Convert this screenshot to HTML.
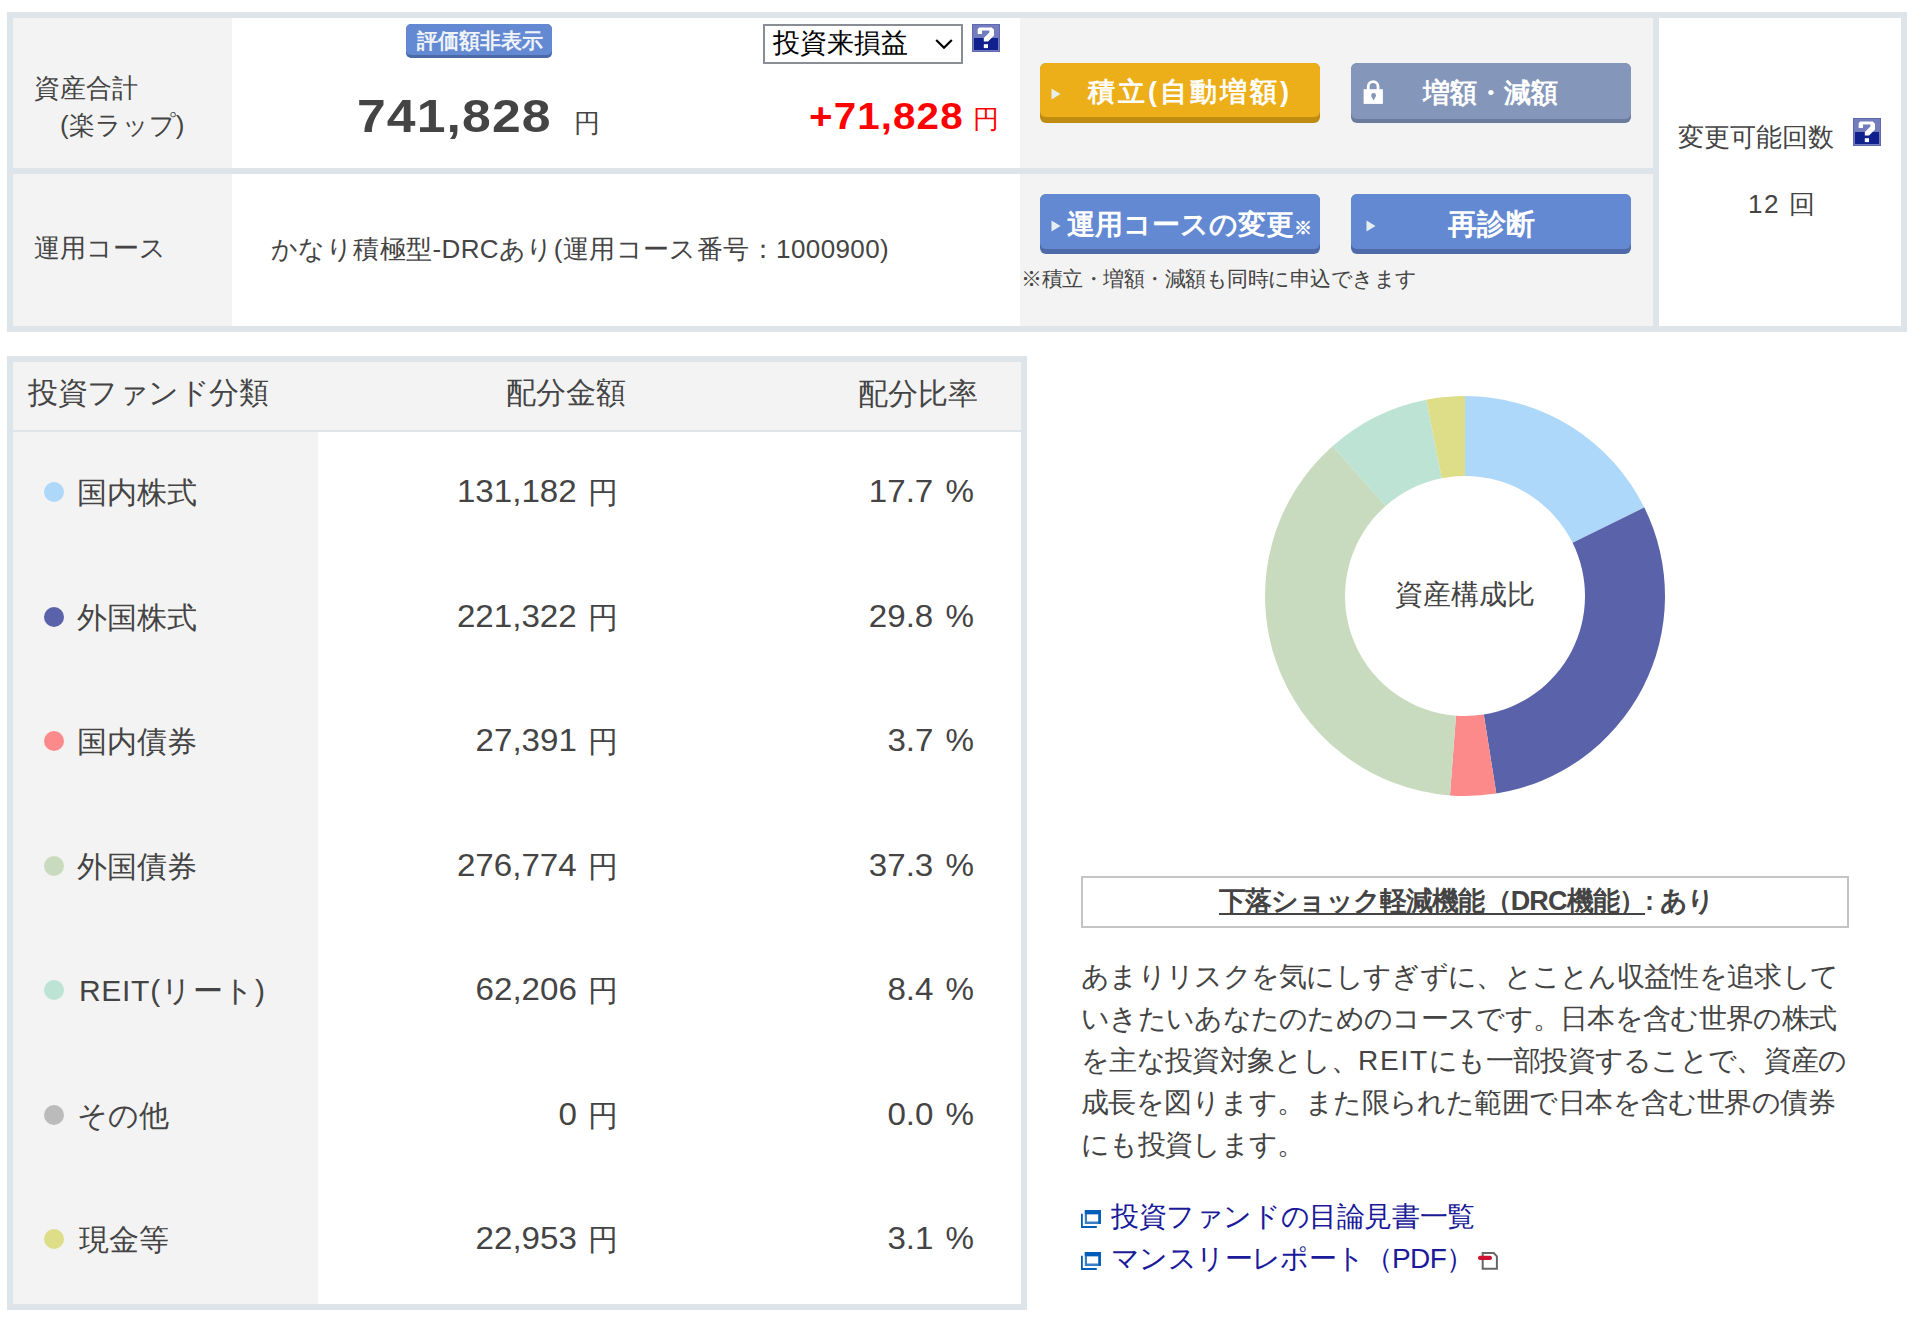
<!DOCTYPE html>
<html lang="ja">
<head>
<meta charset="utf-8">
<style>
*{margin:0;padding:0;box-sizing:border-box}
html,body{width:1922px;height:1326px;overflow:hidden;background:#fff}
body{position:relative;font-family:"Liberation Sans",sans-serif;color:#444}
.a{position:absolute}
.t{position:absolute;white-space:nowrap;line-height:1}
.bd{background:#dde4ea}
.g{background:#f3f3f3}
.w{background:#fff}
.btn{position:absolute;border-radius:6px;overflow:hidden}
.btn .face{position:absolute;left:0;right:0;top:0;border-radius:6px}
.btn .tx{position:absolute;color:#fff;white-space:nowrap;line-height:1;font-weight:bold}
</style>
</head>
<body>
<div class="a bd" style="left:7px;top:12px;width:1900px;height:320px"></div>
<div class="a g" style="left:13px;top:18px;width:219px;height:150px"></div>
<div class="a w" style="left:232px;top:18px;width:788px;height:150px"></div>
<div class="a g" style="left:1020px;top:18px;width:633px;height:150px"></div>
<div class="a g" style="left:13px;top:174px;width:219px;height:152px"></div>
<div class="a w" style="left:232px;top:174px;width:788px;height:152px"></div>
<div class="a g" style="left:1020px;top:174px;width:633px;height:152px"></div>
<div class="a w" style="left:1659px;top:18px;width:242px;height:308px"></div>

<div class="a bd" style="left:7px;top:356px;width:1020px;height:954px"></div>
<div class="a g" style="left:13px;top:362px;width:1008px;height:68px"></div>
<div class="a g" style="left:13px;top:432px;width:305px;height:872px"></div>
<div class="a w" style="left:318px;top:432px;width:703px;height:872px"></div>

<div class="t" style="left:34px;top:70px;font-size:26px;line-height:37px">資産合計<br>　(楽ラップ)</div>
<div class="t" style="left:34px;top:235px;font-size:26px">運用コース</div>

<div class="btn" style="left:406px;top:24px;width:146px;height:34px;background:#4d6aa8;border-radius:5px">
  <div class="face" style="bottom:3px;background:#6389d2;border-radius:5px"></div>
  <div class="tx" style="left:11px;top:6px;font-size:21px;color:#eef2fa">評価額非表示</div>
</div>

<div class="t" style="left:357px;top:92px;font-size:47px;font-weight:bold;letter-spacing:1px;transform:scaleX(1.1);transform-origin:0 0">741,828</div>
<div class="t" style="left:574px;top:110px;font-size:26px">円</div>

<div class="a" style="left:763px;top:24px;width:200px;height:40px;border:2px solid #8a8d93;background:#fff"></div>
<div class="t" style="left:773px;top:30px;font-size:27px;color:#000">投資来損益</div>
<svg class="a" style="left:933px;top:37px" width="22" height="14" viewBox="0 0 22 14"><path d="M3.2 3 L11 10.8 L18.8 3" fill="none" stroke="#000" stroke-width="2.2"/></svg>
<svg class="a" style="left:972px;top:24px" width="28" height="28" viewBox="0 0 28 28">
 <rect x="0" y="0" width="28" height="28" fill="#6068b0"/>
 <rect x="1" y="1" width="26" height="26" fill="#737cbc"/>
 <rect x="2" y="14" width="24" height="12" fill="#10208c"/>
 <path d="M7.2 3.6 H19.8 L22 5.8 V11.6 L16 17.6 H11.8 V14 L17.4 8.6 V6.6 H10 V10 H5.7 V5 Z" fill="#fff"/>
 <rect x="11.8" y="20.2" width="4.2" height="3.9" fill="#fff"/>
</svg>

<div class="t" style="left:809px;top:99px;font-size:36px;font-weight:bold;color:#f00;letter-spacing:1px;transform:scaleX(1.12);transform-origin:0 0">+71,828</div>
<div class="t" style="left:973px;top:106px;font-size:26px;color:#f00">円</div>

<div class="t" style="left:271px;top:236px;font-size:26px;letter-spacing:0.4px">かなり積極型-DRCあり(運用コース番号：1000900)</div>

<div class="btn" style="left:1040px;top:63px;width:280px;height:60px;background:#bf8c12">
  <div class="face" style="bottom:6px;background:#ecae19"></div>
  <svg class="a" style="left:11px;top:25px" width="10" height="12"><path d="M0.5 0.5 L9.5 6 L0.5 11.5 Z" fill="#e6eef0"/></svg>
  <div class="tx" style="left:48px;top:16px;font-size:27px;letter-spacing:3px">積立(自動増額)</div>
</div>
<div class="btn" style="left:1351px;top:63px;width:280px;height:60px;background:#6b7b9b">
  <div class="face" style="bottom:4px;background:#8496b9"></div>
  <svg class="a" style="left:11px;top:16px" width="22" height="26" viewBox="0 0 22 26">
   <path d="M4.9 11 V7.4 A6.25 6.2 0 0 1 17.4 7.4 V11 H14.6 V7.6 A3.5 3.6 0 0 0 7.6 7.6 V11 Z" fill="#fff"/>
   <rect x="1.6" y="10.2" width="19.3" height="14.7" fill="#fff"/>
   <circle cx="11.6" cy="16.4" r="2.4" fill="#8496b9"/>
   <path d="M9.6 17.2 H13.6 L11.9 21.2 H11.3 Z" fill="#8496b9"/>
  </svg>
  <div class="tx" style="left:72px;top:17px;font-size:27px">増額・減額</div>
</div>
<div class="btn" style="left:1040px;top:194px;width:280px;height:60px;background:#4e6aa8">
  <div class="face" style="bottom:5px;background:#6389d2"></div>
  <svg class="a" style="left:11px;top:26px" width="10" height="12"><path d="M0.5 0.5 L9.5 6 L0.5 11.5 Z" fill="#e6eef0"/></svg>
  <div class="tx" style="left:27px;top:17px;font-size:28px">運用コースの変更<span style="font-size:18px">※</span></div>
</div>
<div class="btn" style="left:1351px;top:194px;width:280px;height:60px;background:#4e6aa8">
  <div class="face" style="bottom:5px;background:#6389d2"></div>
  <svg class="a" style="left:15px;top:26px" width="10" height="12"><path d="M0.5 0.5 L9.5 6 L0.5 11.5 Z" fill="#e6eef0"/></svg>
  <div class="tx" style="left:97px;top:16px;font-size:29px">再診断</div>
</div>
<div class="t" style="left:1021px;top:268px;font-size:21px;letter-spacing:-0.5px">※積立・増額・減額も同時に申込できます</div>

<div class="t" style="left:1678px;top:124px;font-size:26px">変更可能回数</div>
<svg class="a" style="left:1853px;top:118px" width="28" height="28" viewBox="0 0 28 28">
 <rect x="0" y="0" width="28" height="28" fill="#6068b0"/>
 <rect x="1" y="1" width="26" height="26" fill="#737cbc"/>
 <rect x="2" y="14" width="24" height="12" fill="#10208c"/>
 <path d="M7.2 3.6 H19.8 L22 5.8 V11.6 L16 17.6 H11.8 V14 L17.4 8.6 V6.6 H10 V10 H5.7 V5 Z" fill="#fff"/>
 <rect x="11.8" y="20.2" width="4.2" height="3.9" fill="#fff"/>
</svg>
<div class="t" style="left:1748px;top:191px;font-size:26px"><span style="letter-spacing:1.5px">12 </span>回</div>

<div class="t" style="left:28px;top:378px;font-size:30px;letter-spacing:-0.5px">投資ファンド分類</div>
<div class="t" style="left:506px;top:378px;font-size:30px">配分金額</div>
<div class="t" style="left:858px;top:379px;font-size:30px">配分比率</div>
<div class="a" style="left:44px;top:482.0px;width:20px;height:20px;border-radius:50%;background:#add8fa"></div>
<div class="t" style="left:77px;top:478.0px;font-size:30px">国内株式</div>
<div class="t" style="right:1345px;top:475.0px;font-size:32px;transform:scaleX(1.035);transform-origin:100% 0">131,182</div>
<div class="t" style="left:588px;top:478.0px;font-size:30px">円</div>
<div class="t" style="right:989px;top:475.0px;font-size:32px;transform:scaleX(1.035);transform-origin:100% 0">17.7</div>
<div class="t" style="right:948px;top:475.0px;font-size:32px">%</div>
<div class="a" style="left:44px;top:606.6px;width:20px;height:20px;border-radius:50%;background:#5a63aa"></div>
<div class="t" style="left:77px;top:602.6px;font-size:30px">外国株式</div>
<div class="t" style="right:1345px;top:599.6px;font-size:32px;transform:scaleX(1.035);transform-origin:100% 0">221,322</div>
<div class="t" style="left:588px;top:602.6px;font-size:30px">円</div>
<div class="t" style="right:989px;top:599.6px;font-size:32px;transform:scaleX(1.035);transform-origin:100% 0">29.8</div>
<div class="t" style="right:948px;top:599.6px;font-size:32px">%</div>
<div class="a" style="left:44px;top:731.1px;width:20px;height:20px;border-radius:50%;background:#fd8a8a"></div>
<div class="t" style="left:77px;top:727.1px;font-size:30px">国内債券</div>
<div class="t" style="right:1345px;top:724.1px;font-size:32px;transform:scaleX(1.035);transform-origin:100% 0">27,391</div>
<div class="t" style="left:588px;top:727.1px;font-size:30px">円</div>
<div class="t" style="right:989px;top:724.1px;font-size:32px;transform:scaleX(1.035);transform-origin:100% 0">3.7</div>
<div class="t" style="right:948px;top:724.1px;font-size:32px">%</div>
<div class="a" style="left:44px;top:855.7px;width:20px;height:20px;border-radius:50%;background:#c8dbbe"></div>
<div class="t" style="left:77px;top:851.7px;font-size:30px">外国債券</div>
<div class="t" style="right:1345px;top:848.7px;font-size:32px;transform:scaleX(1.035);transform-origin:100% 0">276,774</div>
<div class="t" style="left:588px;top:851.7px;font-size:30px">円</div>
<div class="t" style="right:989px;top:848.7px;font-size:32px;transform:scaleX(1.035);transform-origin:100% 0">37.3</div>
<div class="t" style="right:948px;top:848.7px;font-size:32px">%</div>
<div class="a" style="left:44px;top:980.3px;width:20px;height:20px;border-radius:50%;background:#bde3d5"></div>
<div class="t" style="left:79px;top:976.3px;font-size:30px;letter-spacing:0.7px">REIT(リート)</div>
<div class="t" style="right:1345px;top:973.3px;font-size:32px;transform:scaleX(1.035);transform-origin:100% 0">62,206</div>
<div class="t" style="left:588px;top:976.3px;font-size:30px">円</div>
<div class="t" style="right:989px;top:973.3px;font-size:32px;transform:scaleX(1.035);transform-origin:100% 0">8.4</div>
<div class="t" style="right:948px;top:973.3px;font-size:32px">%</div>
<div class="a" style="left:44px;top:1104.8px;width:20px;height:20px;border-radius:50%;background:#bbbbbb"></div>
<div class="t" style="left:77px;top:1100.8px;font-size:30px">その他</div>
<div class="t" style="right:1345px;top:1097.8px;font-size:32px;transform:scaleX(1.035);transform-origin:100% 0">0</div>
<div class="t" style="left:588px;top:1100.8px;font-size:30px">円</div>
<div class="t" style="right:989px;top:1097.8px;font-size:32px;transform:scaleX(1.035);transform-origin:100% 0">0.0</div>
<div class="t" style="right:948px;top:1097.8px;font-size:32px">%</div>
<div class="a" style="left:44px;top:1229.4px;width:20px;height:20px;border-radius:50%;background:#dedd88"></div>
<div class="t" style="left:79px;top:1225.4px;font-size:30px">現金等</div>
<div class="t" style="right:1345px;top:1222.4px;font-size:32px;transform:scaleX(1.035);transform-origin:100% 0">22,953</div>
<div class="t" style="left:588px;top:1225.4px;font-size:30px">円</div>
<div class="t" style="right:989px;top:1222.4px;font-size:32px;transform:scaleX(1.035);transform-origin:100% 0">3.1</div>
<div class="t" style="right:948px;top:1222.4px;font-size:32px">%</div>
<svg class="a" style="left:1264px;top:395px" width="402" height="402" viewBox="0 0 402 402"><path d="M201.00 1.00 A200 200 0 0 1 380.33 112.45 L308.60 147.87 A120 120 0 0 0 201.00 81.00 Z" fill="#add8fa"/><path d="M380.33 112.45 A200 200 0 0 1 232.29 398.54 L219.77 319.52 A120 120 0 0 0 308.60 147.87 Z" fill="#5a63aa"/><path d="M232.29 398.54 A200 200 0 0 1 185.93 400.43 L191.96 320.66 A120 120 0 0 0 219.77 319.52 Z" fill="#fd8a8a"/><path d="M185.93 400.43 A200 200 0 0 1 68.74 50.98 L121.64 110.99 A120 120 0 0 0 191.96 320.66 Z" fill="#c8dbbe"/><path d="M68.74 50.98 A200 200 0 0 1 162.29 4.78 L177.77 83.27 A120 120 0 0 0 121.64 110.99 Z" fill="#bde3d5"/><path d="M162.29 4.78 A200 200 0 0 1 201.00 1.00 L201.00 81.00 A120 120 0 0 0 177.77 83.27 Z" fill="#dedd88"/></svg>

<div class="t" style="left:1395px;top:581px;font-size:28px">資産構成比</div>

<div class="a" style="left:1081px;top:876px;width:768px;height:52px;border:2px solid #c4c4c4"></div>
<div class="t" style="left:1219px;top:888px;font-size:27px;font-weight:bold;letter-spacing:-0.85px"><span style="text-decoration:underline;text-decoration-thickness:2px;text-underline-offset:3px">下落ショック軽減機能（DRC機能）</span>:&nbsp;あり</div>

<div class="t" style="left:1081px;top:956px;font-size:28px;line-height:42px;letter-spacing:-0.7px">あまりリスクを気にしすぎずに、とことん収益性を追求して<br>いきたいあなたのためのコースです。日本を含む世界の株式<br>を主な投資対象とし、<span style="letter-spacing:1.8px">REIT</span>にも一部投資することで、資産の<br><span style="letter-spacing:-0.55px">成長を図ります。また限られた範囲で日本を含む世界の債券</span><br>にも投資します。</div>
<svg class="a" style="left:1076px;top:1204px" width="30" height="30" viewBox="0 0 30 30">
 <path d="M5 9.7 H6.8 V22 H20.8 V24 H5 Z" fill="#005eb8"/>
 <path d="M8.8 6.1 H24.9 V19.9 H8.8 Z M11 10.2 V17.6 H22.4 V10.2 Z" fill="#3b7fc4" fill-rule="evenodd"/>
 <rect x="8.8" y="6.1" width="16.1" height="4.1" fill="#005eb8"/>
 <rect x="22.4" y="6.1" width="2.5" height="13.8" fill="#005eb8"/>
</svg>
<div class="t" style="left:1111px;top:1203px;font-size:28px;color:#1a1a9a;letter-spacing:-0.4px">投資ファンドの目論見書一覧</div>
<svg class="a" style="left:1076px;top:1246px" width="30" height="30" viewBox="0 0 30 30">
 <path d="M5 9.7 H6.8 V22 H20.8 V24 H5 Z" fill="#005eb8"/>
 <path d="M8.8 6.1 H24.9 V19.9 H8.8 Z M11 10.2 V17.6 H22.4 V10.2 Z" fill="#3b7fc4" fill-rule="evenodd"/>
 <rect x="8.8" y="6.1" width="16.1" height="4.1" fill="#005eb8"/>
 <rect x="22.4" y="6.1" width="2.5" height="13.8" fill="#005eb8"/>
</svg>
<div class="t" style="left:1111px;top:1245px;font-size:28px;color:#1a1a9a;letter-spacing:-0.6px">マンスリーレポート（PDF）</div>
<svg class="a" style="left:1472px;top:1246px" width="30" height="30" viewBox="0 0 30 30">
 <path d="M10.7 7.1 H21.7 L24.9 10.3 V22.8 H10.7 Z" fill="#fff" stroke="#666" stroke-width="2"/>
 <rect x="6.1" y="9.7" width="13.8" height="4.3" rx="1.8" fill="#cc1133"/>
</svg>

</body>
</html>
